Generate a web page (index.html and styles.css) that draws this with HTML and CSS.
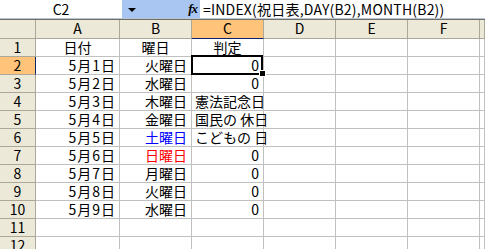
FILE: index.html
```html
<!DOCTYPE html>
<html lang="ja">
<head>
    <meta charset="UTF-8">
    <title>Excel - 祝日表</title>
    <link rel="stylesheet" href="styles.css">
</head>
<body>
    <!-- Name box + formula bar -->
    <div class="formula-bar">
        <div class="name-box">C2</div>
        <div class="name-drop">
            <span class="arrow"></span>
            <span class="fx">fx</span>
        </div>
        <div class="formula">=INDEX(祝日表,DAY(B2),MONTH(B2))</div>
    </div>

    <!-- Sheet -->
    <div class="sheet">
        <div class="hd corner"></div>
        <div class="hd">A</div>
        <div class="hd">B</div>
        <div class="hd active">C</div>
        <div class="hd">D</div>
        <div class="hd">E</div>
        <div class="hd">F</div>
        <div class="hd"></div>

        <div class="rh">1</div>
        <div class="c mid">日付</div>
        <div class="c mid">曜日</div>
        <div class="c mid">判定</div>
        <div class="c"></div><div class="c"></div><div class="c"></div><div class="c"></div>

        <div class="rh active">2</div>
        <div class="c num date">5月1日</div>
        <div class="c num">火曜日</div>
        <div class="c num selected">0</div>
        <div class="c"></div><div class="c"></div><div class="c"></div><div class="c"></div>

        <div class="rh">3</div>
        <div class="c num date">5月2日</div>
        <div class="c num">水曜日</div>
        <div class="c num">0</div>
        <div class="c"></div><div class="c"></div><div class="c"></div><div class="c"></div>

        <div class="rh">4</div>
        <div class="c num date">5月3日</div>
        <div class="c num">木曜日</div>
        <div class="c txt">憲法記念日</div>
        <div class="c"></div><div class="c"></div><div class="c"></div><div class="c"></div>

        <div class="rh">5</div>
        <div class="c num date">5月4日</div>
        <div class="c num">金曜日</div>
        <div class="c txt">国民の 休日</div>
        <div class="c"></div><div class="c"></div><div class="c"></div><div class="c"></div>

        <div class="rh">6</div>
        <div class="c num date">5月5日</div>
        <div class="c num sat">土曜日</div>
        <div class="c txt">こどもの 日</div>
        <div class="c"></div><div class="c"></div><div class="c"></div><div class="c"></div>

        <div class="rh">7</div>
        <div class="c num date">5月6日</div>
        <div class="c num sun">日曜日</div>
        <div class="c num">0</div>
        <div class="c"></div><div class="c"></div><div class="c"></div><div class="c"></div>

        <div class="rh">8</div>
        <div class="c num date">5月7日</div>
        <div class="c num">月曜日</div>
        <div class="c num">0</div>
        <div class="c"></div><div class="c"></div><div class="c"></div><div class="c"></div>

        <div class="rh">9</div>
        <div class="c num date">5月8日</div>
        <div class="c num">火曜日</div>
        <div class="c num">0</div>
        <div class="c"></div><div class="c"></div><div class="c"></div><div class="c"></div>

        <div class="rh">10</div>
        <div class="c num date">5月9日</div>
        <div class="c num">水曜日</div>
        <div class="c num">0</div>
        <div class="c"></div><div class="c"></div><div class="c"></div><div class="c"></div>

        <div class="rh">11</div>
        <div class="c"></div><div class="c"></div><div class="c"></div><div class="c"></div>
        <div class="c"></div><div class="c"></div><div class="c"></div>

        <div class="rh">12</div>
        <div class="c"></div><div class="c"></div><div class="c"></div><div class="c"></div>
        <div class="c"></div><div class="c"></div><div class="c"></div>
    </div>
</body>
</html>
```

FILE: styles.css
```css
:root {
    --header-bg: #ece9d8;
    --header-line: #aca899;
    --grid-line: #c0c0c0;
    --active-bg: #ffc47a;
    --active-line: #0a246a;
    --toolbar-blue: #a9c6f2;
}

* {
    margin: 0;
    padding: 0;
    box-sizing: border-box;
}

body {
    width: 485px;
    height: 249px;
    overflow: hidden;
    background: white;
    font-family: "Noto Sans CJK JP", sans-serif;
    font-size: 14px;
    color: #000;
}

/* ---- formula bar ---- */
.formula-bar {
    display: flex;
    height: 19px;
    border-bottom: 1px solid #b9c6da;
    background: white;
}

.name-box {
    width: 122px;
    text-align: center;
    line-height: 18px;
}

.name-drop {
    width: 78px;
    background: var(--toolbar-blue);
    display: flex;
    align-items: center;
    justify-content: space-between;
    padding: 0 3px 0 6px;
}

.arrow {
    width: 0;
    height: 0;
    border-left: 4px solid transparent;
    border-right: 4px solid transparent;
    border-top: 4px solid #000;
    margin-top: 2px;
}

.fx {
    font-family: "Liberation Serif", serif;
    font-style: italic;
    font-weight: bold;
    font-size: 13px;
    letter-spacing: -1px;
    line-height: 18px;
}

.formula {
    flex: 1;
    padding-left: 3px;
    line-height: 18px;
    white-space: nowrap;
    overflow: hidden;
    letter-spacing: 0.2px;
}

/* ---- sheet grid ---- */
.sheet {
    display: grid;
    grid-template-columns: 36px 84px 72px 72px 72px 72px 72px 1fr;
    grid-template-rows: 19px repeat(12, 18px);
    border-top: 1px solid #716f64;
}

.hd,
.rh {
    background: var(--header-bg);
    border-right: 1px solid var(--header-line);
    border-bottom: 1px solid var(--header-line);
    text-align: center;
    line-height: 17px;
}

.hd.active {
    background: var(--active-bg);
    border-bottom: 1px solid var(--active-line);
}

.rh.active {
    background: var(--active-bg);
    border-right: 1px solid var(--active-line);
}

.c {
    position: relative;
    border-right: 1px solid var(--grid-line);
    border-bottom: 1px solid var(--grid-line);
    line-height: 17px;
    white-space: nowrap;
}

.c.mid {
    text-align: center;
}

.c.num {
    text-align: right;
    padding-right: 4px;
}

.c.date {
    letter-spacing: 1px;
    padding-right: 3px;
}

.c.txt {
    padding-left: 3px;
    overflow: visible;
    z-index: 1;
}

.sat {
    color: #0000ff;
}

.sun {
    color: #ff0000;
}

/* active cell outline + fill handle */
.c.selected::before {
    content: "";
    position: absolute;
    top: -2px;
    left: -1px;
    right: 0;
    bottom: -1px;
    border: 2px solid #000;
    z-index: 2;
}

.c.selected::after {
    content: "";
    position: absolute;
    right: -2px;
    bottom: -2px;
    width: 5px;
    height: 5px;
    background: #000;
    outline: 1px solid white;
    z-index: 3;
}
```
